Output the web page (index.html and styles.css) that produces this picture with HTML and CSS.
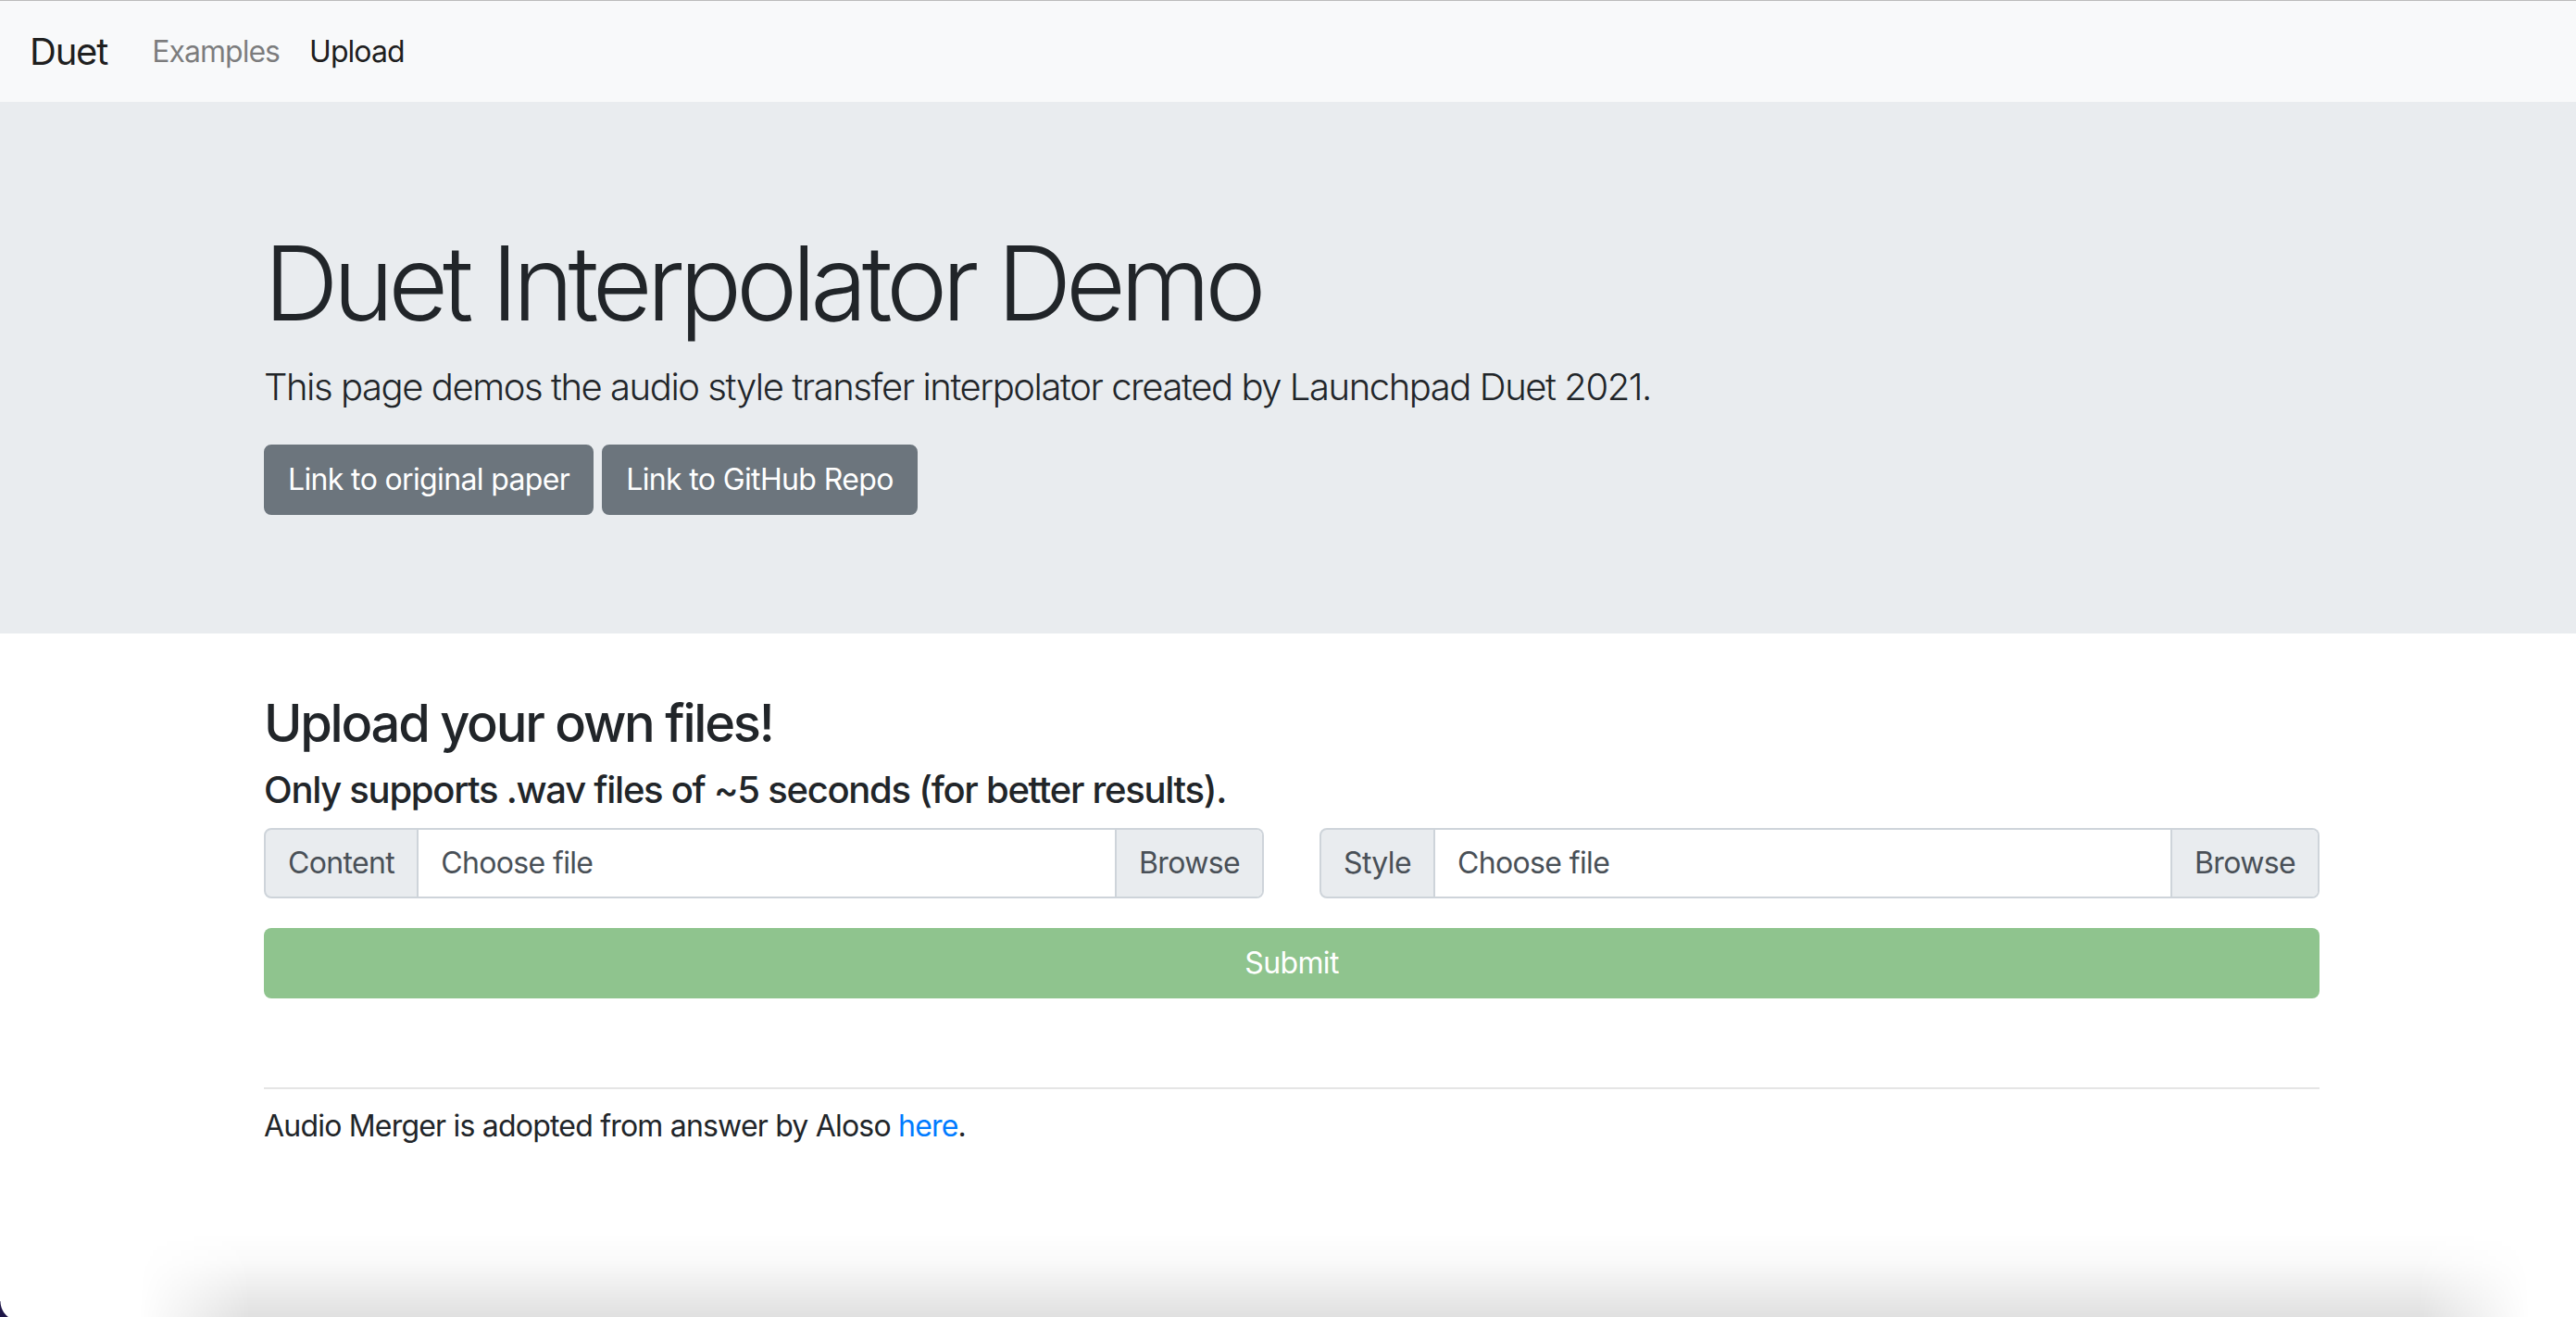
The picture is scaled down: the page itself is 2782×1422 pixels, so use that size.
FILE: index.html
```html
<!DOCTYPE html>
<html lang="en">
<head>
<meta charset="utf-8">
<title>Duet</title>
<link rel="stylesheet" href="styles.css">
</head>
<body>
<div class="topline"></div>
<nav class="navbar">
  <a class="brand">Duet</a>
  <div class="nav">
    <a class="nav-link">Examples</a>
    <a class="nav-link active">Upload</a>
  </div>
</nav>
<header class="jumbotron">
  <div class="container">
    <h1 class="display">Duet Interpolator Demo</h1>
    <p class="lead">This page demos the audio style transfer interpolator created by Launchpad Duet 2021.</p>
    <div class="btn-row">
      <a class="btn">Link to original paper</a>
      <a class="btn">Link to GitHub Repo</a>
    </div>
  </div>
</header>
<main class="container">
  <h3 class="title">Upload your own files!</h3>
  <h5 class="subtitle">Only supports .wav files of ~5 seconds (for better results).</h5>
  <div class="file-row">
    <div class="input-group">
      <span class="prepend">Content</span>
      <span class="file-label"><span class="file-name">Choose file</span><span class="browse">Browse</span></span>
    </div>
    <div class="input-group">
      <span class="prepend">Style</span>
      <span class="file-label"><span class="file-name">Choose file</span><span class="browse">Browse</span></span>
    </div>
  </div>
  <div class="submit">Submit</div>
  <hr class="divider">
  <p class="credit">Audio Merger is adopted from answer by Aloso <a class="link">here</a>.</p>
</main>
<div class="bottom-shadow"></div>
<div class="corner"></div>
</body>
</html>
```
FILE: styles.css
```css
* { box-sizing: border-box; }
html, body { margin: 0; padding: 0; overflow: hidden; }
body {
  font-family: Inter, "Noto Sans", sans-serif;
  color: #212529;
  background: #fff;
  font-size: 32px;
  line-height: 1.5;
  letter-spacing: -0.025em;
  height: 1422px;
  position: relative;
}
a { text-decoration: none; }
.topline { height: 1px; background: #bcbcbc; }
.navbar {
  background: #f8f9fa;
  display: flex;
  align-items: center;
  height: 109px;
  padding: 15px 32px 14px;
}
.brand {
  font-size: 40px;
  line-height: 60px;
  margin-right: 32px;
  color: rgba(0,0,0,.9);
  letter-spacing: -0.03em;
}
.nav { display: flex; }
.nav-link {
  padding: 16px;
  font-size: 32px;
  line-height: 48px;
  color: rgba(0,0,0,.5);
  letter-spacing: -0.03em;
}
.nav-link.active { color: rgba(0,0,0,.9); }
.container {
  width: 2280px;
  margin: 0 auto;
  padding: 0 26px 0 34px;
}
.jumbotron {
  background: #e9ecef;
  padding: 128px 0;
  margin-bottom: 64px;
}
.display {
  font-size: 112px;
  font-weight: 300;
  line-height: 1.2;
  margin: 0 0 16px;
  letter-spacing: -0.055em;
}
.lead {
  font-size: 40px;
  font-weight: 300;
  line-height: 60px;
  margin: 0 0 32px;
  letter-spacing: -0.036em;
}
.btn-row { display: flex; gap: 9px; }
.btn {
  background: #6c757d;
  color: #fff;
  border: 2px solid #6c757d;
  border-radius: 8px;
  padding: 12px 24px;
  font-size: 32px;
  line-height: 48px;
  letter-spacing: -0.02em;
}
.title {
  font-size: 56px;
  font-weight: 500;
  line-height: 1.2;
  margin: 0 0 13px;
  letter-spacing: -0.04em;
}
.subtitle {
  font-size: 40px;
  font-weight: 500;
  line-height: 1.2;
  margin: 0 0 17px;
  letter-spacing: -0.032em;
}
.file-row {
  display: grid;
  grid-template-columns: 1fr 1fr;
  gap: 60px;
}
.input-group {
  display: flex;
  height: 76px;
  color: #495057;
  letter-spacing: -0.02em;
}
.prepend {
  background: #e9ecef;
  border: 2px solid #ced4da;
  border-radius: 8px 0 0 8px;
  padding: 12px 24px;
  line-height: 48px;
}
.file-label {
  flex: 1;
  display: flex;
  border: 2px solid #ced4da;
  border-left: none;
  border-radius: 0 8px 8px 0;
  background: #fff;
  overflow: hidden;
}
.file-name {
  flex: 1;
  padding: 12px 24px;
  line-height: 48px;
}
.browse {
  background: #e9ecef;
  border-left: 2px solid #ced4da;
  padding: 12px 24px;
  line-height: 48px;
}
.submit {
  margin-top: 32px;
  height: 76px;
  background: #8fc48e;
  color: #fff;
  border-radius: 8px;
  text-align: center;
  line-height: 76px;
  letter-spacing: -0.02em;
}
.divider {
  border: 0;
  border-top: 2px solid rgba(0,0,0,.1);
  margin: 96px 0 0;
}
.credit {
  margin: 16px 0 0;
  line-height: 48px;
}
.link { color: #007bff; }
.bottom-shadow {
  position: absolute;
  left: 150px;
  right: 50px;
  bottom: 0;
  height: 90px;
  background: linear-gradient(to bottom, rgba(0,0,0,0), rgba(0,0,0,.025) 35%, rgba(0,0,0,.12));
  -webkit-mask-image: linear-gradient(to right, transparent, #000 120px, #000 calc(100% - 120px), transparent);
  mask-image: linear-gradient(to right, transparent, #000 120px, #000 calc(100% - 120px), transparent);
}
.corner {
  position: absolute;
  left: 0;
  bottom: 0;
  width: 22px;
  height: 17px;
  background: radial-gradient(circle 22px at 22px 0, transparent 21px, #1d1547 22px);
}
```
